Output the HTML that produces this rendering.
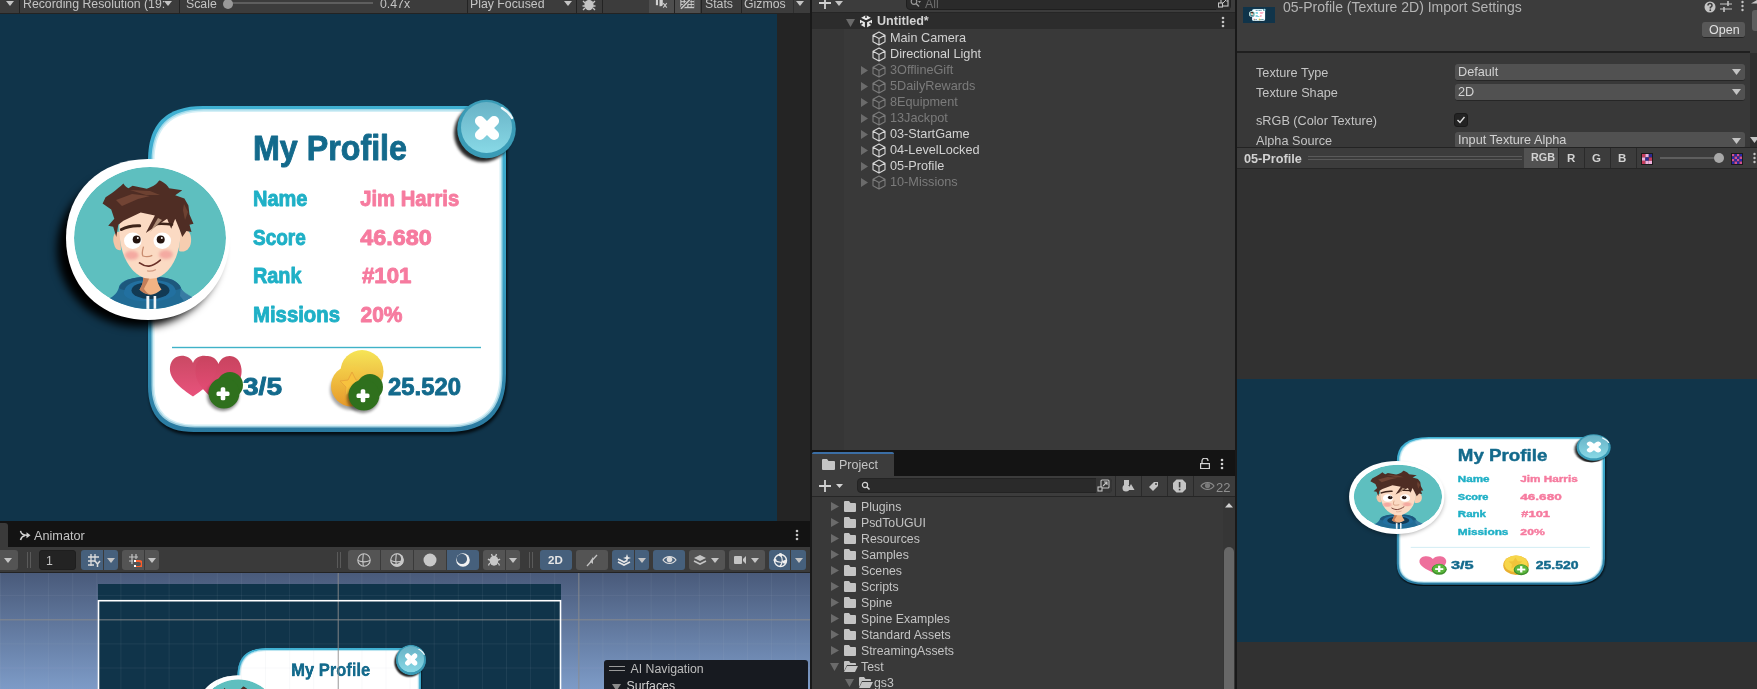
<!DOCTYPE html>
<html><head><meta charset="utf-8">
<style>
*{margin:0;padding:0;box-sizing:border-box}
html,body{width:1757px;height:689px;overflow:hidden;background:#191919;font-family:"Liberation Sans",sans-serif;color:#c4c4c4}
.a{position:absolute}
.t{position:absolute;white-space:pre;line-height:1;will-change:transform}
svg{position:absolute;will-change:transform}
</style></head><body>
<svg width="0" height="0" style="position:absolute;left:0;top:0"><defs>
<linearGradient id="gBorder" x1="0" y1="0" x2="0" y2="1">
  <stop offset="0" stop-color="#3fb0d2"/><stop offset="0.5" stop-color="#3aa0c4"/><stop offset="1" stop-color="#2a7aa0"/></linearGradient>
<radialGradient id="gInner" cx="0.5" cy="0.55" r="0.75">
  <stop offset="0.8" stop-color="#ffffff"/><stop offset="1" stop-color="#dff3f8"/></radialGradient>
<linearGradient id="gClose" x1="0" y1="0" x2="0" y2="1">
  <stop offset="0" stop-color="#68b2c6"/><stop offset="1" stop-color="#88d9e6"/></linearGradient>
<linearGradient id="gHeart" x1="0" y1="0" x2="0" y2="1">
  <stop offset="0" stop-color="#c8445f"/><stop offset="1" stop-color="#e84d78"/></linearGradient>
<linearGradient id="gCoinB" x1="0" y1="0" x2="0" y2="1">
  <stop offset="0" stop-color="#f6e556"/><stop offset="1" stop-color="#e9a93a"/></linearGradient>
<linearGradient id="gCoinF" x1="0" y1="0" x2="0" y2="1">
  <stop offset="0" stop-color="#f4d04a"/><stop offset="1" stop-color="#e6992a"/></linearGradient>
<filter id="fSh" x="-30%" y="-30%" width="160%" height="160%"><feGaussianBlur stdDeviation="4.5"/></filter>
<filter id="fSh2" x="-30%" y="-30%" width="160%" height="160%"><feGaussianBlur stdDeviation="1.5"/></filter>
<clipPath id="cTeal"><ellipse cx="150" cy="238" rx="76" ry="71"/></clipPath>
<g id="cardG"><path d="M203,106 L480,106 Q506,106 506,132 L506,374 Q506,432 448,432 L194,432 Q148,432 148,386 L148,160 Q148,106 203,106 Z" fill="#000" opacity="0.75" transform="translate(1,3)" filter="url(#fSh2)"/>
<path d="M203,106 L480,106 Q506,106 506,132 L506,374 Q506,432 448,432 L194,432 Q148,432 148,386 L148,160 Q148,106 203,106 Z" fill="url(#gBorder)"/>
<path d="M204,110.5 L479,110.5 Q501,110.5 501,133 L501,374 Q501,426 448,426 L195,426 Q153,426 153,385 L153,161 Q153,110.5 204,110.5 Z" fill="#ffffff"/>
<path d="M204,110.5 L479,110.5 Q501,110.5 501,133 L501,374 Q501,426 448,426 L195,426 Q153,426 153,385 L153,161 Q153,110.5 204,110.5 Z" fill="none" stroke="#c6eaf3" stroke-width="3" opacity="0.75"/>
<ellipse cx="139" cy="249" rx="82" ry="78" fill="#000" opacity="1" filter="url(#fSh)"/>
<path d="M148,159 C196,159 230,190 230,236 C230,284 196,320 148,320 C98,320 66,284 66,238 C66,192 100,159 148,159 Z" fill="#ffffff"/>

<g clip-path="url(#cTeal)">
  <ellipse cx="150" cy="238" rx="76" ry="71" fill="#5ebfbf"/>
  <path d="M98,318 C100,306 104,300 110,298 C114,296 118,292 119,287 C121,281 130,277 150,276.6 C166,276.6 176,279 180.6,287 C182,291 186,295 194,298 C198,302 200,310 202,318 Z" fill="#216b95"/>
  <path d="M180.6,289 C186,294 194,297 197,302 L200,318 L190,318 C188,308 184,300 180,296 Z" fill="#3f7fa6" opacity="0.8"/>
  <path d="M119,288 C122,280 132,277 150,277 C168,277 178,280 181,288 C176,293 124,293 119,288 Z" fill="#1d587d"/>
  <path d="M124,294 C126,300 140,302 150.8,301 C162,302 174,298 176,292.6 C176,284 166,280 150,280 C134,280 124,284 124,294 Z" fill="#2270a0"/>
  <ellipse cx="150.5" cy="290.4" rx="19" ry="8.7" fill="#123a54"/>
  <path d="M143.5,276 L156.6,276 C157,282 159,286 161.5,289.5 C158,292.5 154,294.5 150.8,294.8 C147,294.5 142,292.5 139.5,289.5 C142,286 143.3,282 143.5,276 Z" fill="#f2b384"/>
  <path d="M143.5,276 L150,276 C148,282 145,286 144,289 C146,292 148,294 150.8,294.8 C147,294.5 142,292.5 139.5,289.5 C142,286 143.3,282 143.5,276 Z" fill="#b8714f" opacity="0.8"/>
  <rect x="146.4" y="296" width="2.9" height="16" fill="#f2f6f8"/>
  <rect x="153.6" y="296" width="2.6" height="16" fill="#f2f6f8"/>
</g>
<path d="M180,232 C186,226 192,232 191,242 C190,250 184,253 179,251 Z" fill="#f6cdb0"/>
<path d="M120,232 C114,230 112,238 114,244 C115,249 118,251 121,250 Z" fill="#f3c4a6"/>
<path d="M119.5,222 C118,248 126,270 143,277.5 C147,279 154,279 158,277.5 C175,270 182,248 180.5,222 C170,206 130,206 119.5,222 Z" fill="#fbdac3"/>
<ellipse cx="131.6" cy="255.3" rx="7" ry="4.5" fill="#f29a96" opacity="0.75" filter="url(#fSh2)"/>
<ellipse cx="165.9" cy="254.5" rx="7" ry="4.5" fill="#f29a96" opacity="0.75" filter="url(#fSh2)"/>
<path d="M102.6,203.4 L105.6,197.3 L112,193 C116,190 120,187 123.4,183.6 C125,186 126.5,187.5 128.5,188.2 L132.6,185.7 L146.8,188.7 C152,187 156,185 158,182 C158.5,180.5 160,180 161,181 C165,183 168,186 169.1,188.2 L182.3,190.2 L175.2,195.3 L184.4,198.4 L188.4,205.5 L189.5,214.6 L193.5,223.8 L189.5,224.8 L191.5,231.9 L186.4,230.9 L182.3,237 L179.3,228.8 L175.2,218.7 L171.2,228.8 L167.1,218.7 L145.8,232.9 L154.9,215.6 L140.7,212.6 L123.4,220.7 L118.3,224.8 L116.3,237 L113.2,226.8 L108.2,225.8 L114.3,218.7 L111.2,209.5 Z" fill="#4f2d24"/>
<path d="M116,200 L132,194 L150,196 L138,199 L122,206 Z" fill="#7a4a38" opacity="0.8"/>
<path d="M130,190 L150,191 L160,195 L146,195 Z" fill="#7a4a38" opacity="0.7"/>
<path d="M184,204 L188,212 L185,220 L183,210 Z" fill="#7a4a38" opacity="0.7"/>
<path d="M121.4,229.5 C127,226.5 134,225.5 139.7,225.8" stroke="#3e241a" stroke-width="3" fill="none" stroke-linecap="round"/>
<path d="M156,224 C162,223.5 167,223.8 172,224.5" stroke="#3e241a" stroke-width="2.6" fill="none" stroke-linecap="round"/>
<path d="M150,232 L158,218 L162,220 Z" fill="#c9a88f" opacity="0.8"/>
<ellipse cx="132.8" cy="240.8" rx="8.8" ry="8.2" fill="#ffffff"/>
<ellipse cx="162.3" cy="240.8" rx="8.8" ry="8.2" fill="#ffffff"/>
<circle cx="136.7" cy="239.4" r="4" fill="#24140f"/>
<circle cx="160.7" cy="239.4" r="4" fill="#24140f"/>
<circle cx="137.8" cy="238" r="1" fill="#ffffff"/>
<circle cx="161.8" cy="238" r="1" fill="#ffffff"/>
<path d="M143.5,246.6 C142.5,250 141.5,254 143,256 C146,257 150,256.5 152.3,255.3" stroke="#c98d70" stroke-width="1.3" fill="none"/>
<path d="M139.5,262.9 C143,265.5 146,266.3 149,266.1 C153,265.6 157,263 160.3,260.1" stroke="#6a3028" stroke-width="1.7" fill="none" stroke-linecap="round"/>
<path d="M147.5,270.9 C150,271.5 153,271 155.5,269.7" stroke="#d49a80" stroke-width="1.2" fill="none" stroke-linecap="round"/>

<text x="253" y="159.6" font-family="Liberation Sans" font-weight="bold" stroke-width="0.9" stroke-linejoin="round" font-size="34.5" fill="#136a8c" stroke="#136a8c" textLength="154" lengthAdjust="spacingAndGlyphs">My Profile</text>
<text x="253" y="206" font-family="Liberation Sans" font-weight="bold" stroke-width="0.9" stroke-linejoin="round" font-size="21.4" fill="#1fb0c6" stroke="#1fb0c6" textLength="54.5" lengthAdjust="spacingAndGlyphs">Name</text>
<text x="360.2" y="206" font-family="Liberation Sans" font-weight="bold" stroke-width="0.9" stroke-linejoin="round" font-size="21.4" fill="#f67b9f" stroke="#f67b9f" textLength="99" lengthAdjust="spacingAndGlyphs">Jim Harris</text>
<text x="253" y="244.5" font-family="Liberation Sans" font-weight="bold" stroke-width="0.9" stroke-linejoin="round" font-size="21.4" fill="#1fb0c6" stroke="#1fb0c6" textLength="52.7" lengthAdjust="spacingAndGlyphs">Score</text>
<text x="360.2" y="244.5" font-family="Liberation Sans" font-weight="bold" stroke-width="0.9" stroke-linejoin="round" font-size="21.4" fill="#f67b9f" stroke="#f67b9f" textLength="71.5" lengthAdjust="spacingAndGlyphs">46.680</text>
<text x="253" y="283.3" font-family="Liberation Sans" font-weight="bold" stroke-width="0.9" stroke-linejoin="round" font-size="21.4" fill="#1fb0c6" stroke="#1fb0c6" textLength="48.5" lengthAdjust="spacingAndGlyphs">Rank</text>
<text x="362" y="283.3" font-family="Liberation Sans" font-weight="bold" stroke-width="0.9" stroke-linejoin="round" font-size="21.4" fill="#f67b9f" stroke="#f67b9f" textLength="49.5" lengthAdjust="spacingAndGlyphs">#101</text>
<text x="253" y="322" font-family="Liberation Sans" font-weight="bold" stroke-width="0.9" stroke-linejoin="round" font-size="21.4" fill="#1fb0c6" stroke="#1fb0c6" textLength="87" lengthAdjust="spacingAndGlyphs">Missions</text>
<text x="360.5" y="322" font-family="Liberation Sans" font-weight="bold" stroke-width="0.9" stroke-linejoin="round" font-size="21.4" fill="#f67b9f" stroke="#f67b9f" textLength="42" lengthAdjust="spacingAndGlyphs">20%</text>
<rect x="172" y="346.8" width="309" height="1.4" fill="#3fb2c8"/>
<path d="M218.5,364.1 C214.8,353.1 197.3,352.1 195.5,368.9 C194.1,383.3 207.0,393.9 218.5,402.5 C230.0,393.9 242.9,383.3 241.5,368.9 C239.7,352.1 222.2,353.1 218.5,364.1 Z" fill="url(#gHeart)"/>
<path d="M193.0,362.9 C189.3,353.2 171.8,352.4 170.0,367.1 C168.6,379.7 181.5,388.9 193.0,396.5 C204.5,388.9 217.4,379.7 216.0,367.1 C214.2,352.4 196.7,353.2 193.0,362.9 Z" fill="url(#gHeart)" opacity="0.97"/>

<ellipse cx="223" cy="396" rx="16" ry="15" fill="#000" opacity="0.45" filter="url(#fSh2)"/>
<circle cx="230" cy="385" r="13" fill="#2f701d"/>
<circle cx="224" cy="393" r="15.5" fill="#2f701d"/>
<rect x="216.5" y="391.5" width="13" height="4.6" rx="1.5" fill="#fff"/>
<rect x="220.7" y="387.3" width="4.6" height="13" rx="1.5" fill="#fff"/>

<text x="243" y="394.6" font-family="Liberation Sans" font-weight="bold" stroke-width="0.9" stroke-linejoin="round" font-size="24.7" fill="#136a8c" stroke="#136a8c" textLength="39" lengthAdjust="spacingAndGlyphs">3/5</text>
<ellipse cx="352" cy="390" rx="22" ry="20" fill="#000" opacity="0.35" filter="url(#fSh2)"/>
<circle cx="362" cy="371.5" r="21.5" fill="url(#gCoinB)"/>
<circle cx="351.5" cy="386" r="20.5" fill="url(#gCoinF)"/>
<path d="M352,372 L356,380 L364,381 L358,387 L360,396 L352,391 L345,396 L346,387 L340,381 L348,380 Z" fill="#f7c23e" stroke="#e9a73a" stroke-width="1"/>

<ellipse cx="363" cy="398" rx="16" ry="15" fill="#000" opacity="0.45" filter="url(#fSh2)"/>
<circle cx="370" cy="387" r="13" fill="#2f701d"/>
<circle cx="364" cy="395" r="15.5" fill="#2f701d"/>
<rect x="356.5" y="393.5" width="13" height="4.6" rx="1.5" fill="#fff"/>
<rect x="360.7" y="389.3" width="4.6" height="13" rx="1.5" fill="#fff"/>

<text x="388" y="394.6" font-family="Liberation Sans" font-weight="bold" stroke-width="0.9" stroke-linejoin="round" font-size="24.7" fill="#136a8c" stroke="#136a8c" textLength="73" lengthAdjust="spacingAndGlyphs">25.520</text>
<ellipse cx="483" cy="133" rx="29" ry="29" fill="#000" opacity="0.85" filter="url(#fSh2)"/>
<circle cx="486.5" cy="129" r="29.3" fill="#3a9bb6"/>
<circle cx="486.5" cy="127.5" r="25.5" fill="url(#gClose)"/>
<path d="M502,108 C507,111 510,114 512,118" stroke="#ffffff" stroke-width="2.5" fill="none" stroke-linecap="round" opacity="0.9"/>
<g transform="translate(487,128) rotate(45)"><rect x="-15" y="-5" width="30" height="10" rx="5" fill="#fff"/><rect x="-5" y="-15" width="10" height="30" rx="5" fill="#fff"/></g></g><g id="cardP"><path d="M203,106 L480,106 Q506,106 506,132 L506,374 Q506,432 448,432 L194,432 Q148,432 148,386 L148,160 Q148,106 203,106 Z" fill="#000" opacity="0.75" transform="translate(1,3)" filter="url(#fSh2)"/>
<path d="M203,106 L480,106 Q506,106 506,132 L506,374 Q506,432 448,432 L194,432 Q148,432 148,386 L148,160 Q148,106 203,106 Z" fill="url(#gBorder)"/>
<path d="M204,110.5 L479,110.5 Q501,110.5 501,133 L501,374 Q501,426 448,426 L195,426 Q153,426 153,385 L153,161 Q153,110.5 204,110.5 Z" fill="#ffffff"/>
<path d="M204,110.5 L479,110.5 Q501,110.5 501,133 L501,374 Q501,426 448,426 L195,426 Q153,426 153,385 L153,161 Q153,110.5 204,110.5 Z" fill="none" stroke="#c6eaf3" stroke-width="3" opacity="0.75"/>
<ellipse cx="146" cy="244" rx="82" ry="79" fill="#000" opacity="0.35" filter="url(#fSh)"/>
<path d="M148,159 C196,159 230,190 230,236 C230,284 196,320 148,320 C98,320 66,284 66,238 C66,192 100,159 148,159 Z" fill="#ffffff"/>

<g clip-path="url(#cTeal)">
  <ellipse cx="150" cy="238" rx="76" ry="71" fill="#5ebfbf"/>
  <path d="M98,318 C100,306 104,300 110,298 C114,296 118,292 119,287 C121,281 130,277 150,276.6 C166,276.6 176,279 180.6,287 C182,291 186,295 194,298 C198,302 200,310 202,318 Z" fill="#216b95"/>
  <path d="M180.6,289 C186,294 194,297 197,302 L200,318 L190,318 C188,308 184,300 180,296 Z" fill="#3f7fa6" opacity="0.8"/>
  <path d="M119,288 C122,280 132,277 150,277 C168,277 178,280 181,288 C176,293 124,293 119,288 Z" fill="#1d587d"/>
  <path d="M124,294 C126,300 140,302 150.8,301 C162,302 174,298 176,292.6 C176,284 166,280 150,280 C134,280 124,284 124,294 Z" fill="#2270a0"/>
  <ellipse cx="150.5" cy="290.4" rx="19" ry="8.7" fill="#123a54"/>
  <path d="M143.5,276 L156.6,276 C157,282 159,286 161.5,289.5 C158,292.5 154,294.5 150.8,294.8 C147,294.5 142,292.5 139.5,289.5 C142,286 143.3,282 143.5,276 Z" fill="#f2b384"/>
  <path d="M143.5,276 L150,276 C148,282 145,286 144,289 C146,292 148,294 150.8,294.8 C147,294.5 142,292.5 139.5,289.5 C142,286 143.3,282 143.5,276 Z" fill="#b8714f" opacity="0.8"/>
  <rect x="146.4" y="296" width="2.9" height="16" fill="#f2f6f8"/>
  <rect x="153.6" y="296" width="2.6" height="16" fill="#f2f6f8"/>
</g>
<path d="M180,232 C186,226 192,232 191,242 C190,250 184,253 179,251 Z" fill="#f6cdb0"/>
<path d="M120,232 C114,230 112,238 114,244 C115,249 118,251 121,250 Z" fill="#f3c4a6"/>
<path d="M119.5,222 C118,248 126,270 143,277.5 C147,279 154,279 158,277.5 C175,270 182,248 180.5,222 C170,206 130,206 119.5,222 Z" fill="#fbdac3"/>
<ellipse cx="131.6" cy="255.3" rx="7" ry="4.5" fill="#f29a96" opacity="0.75" filter="url(#fSh2)"/>
<ellipse cx="165.9" cy="254.5" rx="7" ry="4.5" fill="#f29a96" opacity="0.75" filter="url(#fSh2)"/>
<path d="M102.6,203.4 L105.6,197.3 L112,193 C116,190 120,187 123.4,183.6 C125,186 126.5,187.5 128.5,188.2 L132.6,185.7 L146.8,188.7 C152,187 156,185 158,182 C158.5,180.5 160,180 161,181 C165,183 168,186 169.1,188.2 L182.3,190.2 L175.2,195.3 L184.4,198.4 L188.4,205.5 L189.5,214.6 L193.5,223.8 L189.5,224.8 L191.5,231.9 L186.4,230.9 L182.3,237 L179.3,228.8 L175.2,218.7 L171.2,228.8 L167.1,218.7 L145.8,232.9 L154.9,215.6 L140.7,212.6 L123.4,220.7 L118.3,224.8 L116.3,237 L113.2,226.8 L108.2,225.8 L114.3,218.7 L111.2,209.5 Z" fill="#4f2d24"/>
<path d="M116,200 L132,194 L150,196 L138,199 L122,206 Z" fill="#7a4a38" opacity="0.8"/>
<path d="M130,190 L150,191 L160,195 L146,195 Z" fill="#7a4a38" opacity="0.7"/>
<path d="M184,204 L188,212 L185,220 L183,210 Z" fill="#7a4a38" opacity="0.7"/>
<path d="M121.4,229.5 C127,226.5 134,225.5 139.7,225.8" stroke="#3e241a" stroke-width="3" fill="none" stroke-linecap="round"/>
<path d="M156,224 C162,223.5 167,223.8 172,224.5" stroke="#3e241a" stroke-width="2.6" fill="none" stroke-linecap="round"/>
<path d="M150,232 L158,218 L162,220 Z" fill="#c9a88f" opacity="0.8"/>
<ellipse cx="132.8" cy="240.8" rx="8.8" ry="8.2" fill="#ffffff"/>
<ellipse cx="162.3" cy="240.8" rx="8.8" ry="8.2" fill="#ffffff"/>
<circle cx="136.7" cy="239.4" r="4" fill="#24140f"/>
<circle cx="160.7" cy="239.4" r="4" fill="#24140f"/>
<circle cx="137.8" cy="238" r="1" fill="#ffffff"/>
<circle cx="161.8" cy="238" r="1" fill="#ffffff"/>
<path d="M143.5,246.6 C142.5,250 141.5,254 143,256 C146,257 150,256.5 152.3,255.3" stroke="#c98d70" stroke-width="1.3" fill="none"/>
<path d="M139.5,262.9 C143,265.5 146,266.3 149,266.1 C153,265.6 157,263 160.3,260.1" stroke="#6a3028" stroke-width="1.7" fill="none" stroke-linecap="round"/>
<path d="M147.5,270.9 C150,271.5 153,271 155.5,269.7" stroke="#d49a80" stroke-width="1.2" fill="none" stroke-linecap="round"/>

<text x="253" y="159.6" font-family="Liberation Sans" font-weight="bold" stroke-width="0.9" stroke-linejoin="round" font-size="34.5" fill="#136a8c" stroke="#136a8c" textLength="154" lengthAdjust="spacingAndGlyphs">My Profile</text>
<text x="253" y="206" font-family="Liberation Sans" font-weight="bold" stroke-width="0.9" stroke-linejoin="round" font-size="21.4" fill="#1fb0c6" stroke="#1fb0c6" textLength="54.5" lengthAdjust="spacingAndGlyphs">Name</text>
<text x="360.2" y="206" font-family="Liberation Sans" font-weight="bold" stroke-width="0.9" stroke-linejoin="round" font-size="21.4" fill="#f67b9f" stroke="#f67b9f" textLength="99" lengthAdjust="spacingAndGlyphs">Jim Harris</text>
<text x="253" y="244.5" font-family="Liberation Sans" font-weight="bold" stroke-width="0.9" stroke-linejoin="round" font-size="21.4" fill="#1fb0c6" stroke="#1fb0c6" textLength="52.7" lengthAdjust="spacingAndGlyphs">Score</text>
<text x="360.2" y="244.5" font-family="Liberation Sans" font-weight="bold" stroke-width="0.9" stroke-linejoin="round" font-size="21.4" fill="#f67b9f" stroke="#f67b9f" textLength="71.5" lengthAdjust="spacingAndGlyphs">46.680</text>
<text x="253" y="283.3" font-family="Liberation Sans" font-weight="bold" stroke-width="0.9" stroke-linejoin="round" font-size="21.4" fill="#1fb0c6" stroke="#1fb0c6" textLength="48.5" lengthAdjust="spacingAndGlyphs">Rank</text>
<text x="362" y="283.3" font-family="Liberation Sans" font-weight="bold" stroke-width="0.9" stroke-linejoin="round" font-size="21.4" fill="#f67b9f" stroke="#f67b9f" textLength="49.5" lengthAdjust="spacingAndGlyphs">#101</text>
<text x="253" y="322" font-family="Liberation Sans" font-weight="bold" stroke-width="0.9" stroke-linejoin="round" font-size="21.4" fill="#1fb0c6" stroke="#1fb0c6" textLength="87" lengthAdjust="spacingAndGlyphs">Missions</text>
<text x="360.5" y="322" font-family="Liberation Sans" font-weight="bold" stroke-width="0.9" stroke-linejoin="round" font-size="21.4" fill="#f67b9f" stroke="#f67b9f" textLength="42" lengthAdjust="spacingAndGlyphs">20%</text>
<rect x="172" y="348.5" width="308" height="2" fill="#cdebf2"/>
<path d="M210.0,375.4 C206.3,366.9 188.8,366.1 187.0,379.1 C185.6,390.2 198.5,398.3 210.0,405.0 C221.5,398.3 234.4,390.2 233.0,379.1 C231.2,366.1 213.7,366.9 210.0,375.4 Z" fill="#ee6f9c"/>
<ellipse cx="221" cy="398" rx="13" ry="12" fill="#3f8f2c"/>
<ellipse cx="221" cy="397" rx="11" ry="10" fill="#5bb63c"/>
<rect x="214" y="395.5" width="14" height="4" fill="#fff"/><rect x="219" y="390" width="4" height="14" fill="#fff"/>
<text x="241.2" y="397" font-family="Liberation Sans" font-weight="bold" stroke-width="0.9" stroke-linejoin="round" font-size="23" fill="#136a8c" stroke="#136a8c" textLength="39" lengthAdjust="spacingAndGlyphs">3/5</text>
<ellipse cx="353" cy="389" rx="22" ry="21.5" fill="#e9b030"/>
<ellipse cx="353" cy="386" rx="20" ry="18.5" fill="#f7d64a"/>
<path d="M352,372 L356,380 L364,381 L358,387 L360,396 L352,391 L345,396 L346,387 L340,381 L348,380 Z" fill="#f0c43a"/>
<ellipse cx="362" cy="399" rx="13" ry="12" fill="#3f8f2c"/>
<ellipse cx="362" cy="398" rx="11" ry="10" fill="#5bb63c"/>
<rect x="355" y="396.5" width="14" height="4" fill="#fff"/><rect x="360" y="391" width="4" height="14" fill="#fff"/>
<text x="387" y="396.3" font-family="Liberation Sans" font-weight="bold" stroke-width="0.9" stroke-linejoin="round" font-size="23" fill="#136a8c" stroke="#136a8c" textLength="73.5" lengthAdjust="spacingAndGlyphs">25.520</text>
<ellipse cx="483" cy="133" rx="29" ry="29" fill="#000" opacity="0.85" filter="url(#fSh2)"/>
<circle cx="486.5" cy="129" r="29.3" fill="#3a9bb6"/>
<circle cx="486.5" cy="127.5" r="25.5" fill="url(#gClose)"/>
<path d="M502,108 C507,111 510,114 512,118" stroke="#ffffff" stroke-width="2.5" fill="none" stroke-linecap="round" opacity="0.9"/>
<g transform="translate(487,128) rotate(45)"><rect x="-15" y="-5" width="30" height="10" rx="5" fill="#fff"/><rect x="-5" y="-15" width="10" height="30" rx="5" fill="#fff"/></g></g></defs></svg>
<div class="a" style="left:0px;top:0px;width:810px;height:13px;background:#3c3c3c;"></div>
<div class="a" style="left:0px;top:13px;width:810px;height:1px;background:#232323;"></div>
<svg style="left:6.0px;top:0.5px;" width="8" height="5" viewBox="0 0 8 5"><path d="M0,0 L8,0 L4.0,5 Z" fill="#c4c4c4"/></svg>
<div class="a" style="left:19px;top:0px;width:1px;height:13px;background:#232323;"></div>
<div class="t" style="left:23px;top:-2.41px;font-size:12.3px;color:#c4c4c4;">Recording Resolution (19:</div>
<svg style="left:164.0px;top:0.5px;" width="8" height="5" viewBox="0 0 8 5"><path d="M0,0 L8,0 L4.0,5 Z" fill="#c4c4c4"/></svg>
<div class="a" style="left:179px;top:0px;width:1px;height:13px;background:#232323;"></div>
<div class="t" style="left:186px;top:-2.41px;font-size:12.3px;color:#c4c4c4;">Scale</div>
<div class="a" style="left:230px;top:2px;width:143px;height:2px;background:#5e5e5e;"></div>
<div class="a" style="left:223px;top:-1px;width:10px;height:10px;background:#999999;border-radius:50%"></div>
<div class="t" style="left:380px;top:-2.41px;font-size:12.3px;color:#c4c4c4;">0.47x</div>
<div class="a" style="left:467px;top:0px;width:1px;height:13px;background:#232323;"></div>
<div class="t" style="left:470px;top:-2.41px;font-size:12.3px;color:#c4c4c4;">Play Focused</div>
<svg style="left:564.0px;top:0.5px;" width="8" height="5" viewBox="0 0 8 5"><path d="M0,0 L8,0 L4.0,5 Z" fill="#c4c4c4"/></svg>
<div class="a" style="left:576px;top:0px;width:1px;height:13px;background:#232323;"></div>
<svg style="left:582px;top:-3px;" width="14" height="14" viewBox="0 0 14 14"><ellipse cx="7" cy="8" rx="4.6" ry="5.2" fill="#c4c4c4"/><path d="M1,4 L3,6 M13,4 L11,6 M0.5,9 L3,9 M13.5,9 L11,9 M1,13 L3,11 M13,13 L11,11" stroke="#c4c4c4" stroke-width="1.3"/></svg>
<div class="a" style="left:602px;top:0px;width:1px;height:13px;background:#232323;"></div>
<div class="a" style="left:649px;top:0px;width:25px;height:13px;background:#4e4e4e;"></div>
<div class="a" style="left:675px;top:0px;width:25px;height:13px;background:#4e4e4e;"></div>
<div class="a" style="left:674px;top:0px;width:1px;height:13px;background:#232323;"></div>
<svg style="left:650px;top:-4px;" width="50" height="14" viewBox="0 0 50 14"><rect x="5.899999999999977" y="0" width="2.1" height="9.2" fill="#d0d0d0"/><path d="M9.5,0 H12.799999999999955 V8.2 Q12.799999999999955,10.2 11,10.2 H9.5 Z" fill="#d0d0d0"/><path d="M13.200000000000045,7.2 L16.799999999999955,11.6 M16.799999999999955,7.2 L13.200000000000045,11.6" stroke="#c8c8c8" stroke-width="1.1"/><rect x="30.299999999999955" y="0" width="13.9" height="12.2" fill="#c8c8c8"/><rect x="31.399999999999977" y="2.0" width="2.3" height="3.1" fill="#4e4e4e"/><rect x="31.399999999999977" y="6.2" width="2.3" height="1.8" fill="#4e4e4e"/><rect x="31.399999999999977" y="9.0" width="2.3" height="1.8" fill="#4e4e4e"/><rect x="34.89999999999998" y="2.0" width="2.3" height="3.1" fill="#4e4e4e"/><rect x="34.89999999999998" y="6.2" width="2.3" height="1.8" fill="#4e4e4e"/><rect x="34.89999999999998" y="9.0" width="2.3" height="1.8" fill="#4e4e4e"/><rect x="38.5" y="2.0" width="2.3" height="3.1" fill="#4e4e4e"/><rect x="38.5" y="6.2" width="2.3" height="1.8" fill="#4e4e4e"/><rect x="38.5" y="9.0" width="2.3" height="1.8" fill="#4e4e4e"/><rect x="41.60000000000002" y="2.0" width="2.3" height="3.1" fill="#4e4e4e"/><rect x="41.60000000000002" y="6.2" width="2.3" height="1.8" fill="#4e4e4e"/><rect x="41.60000000000002" y="9.0" width="2.3" height="1.8" fill="#4e4e4e"/><path d="M31,12.8 L41,2.5" stroke="#4e4e4e" stroke-width="3.2"/><path d="M31,12.8 L41,2.5" stroke="#c8c8c8" stroke-width="1.6"/></svg>
<div class="a" style="left:701px;top:0px;width:1px;height:13px;background:#232323;"></div>
<div class="t" style="left:705px;top:-2.41px;font-size:12.3px;color:#c4c4c4;">Stats</div>
<div class="a" style="left:741px;top:0px;width:1px;height:13px;background:#232323;"></div>
<div class="t" style="left:744px;top:-2.41px;font-size:12.3px;color:#c4c4c4;">Gizmos</div>
<div class="a" style="left:793px;top:0px;width:1px;height:13px;background:#2e2e2e;"></div>
<svg style="left:796.0px;top:0.5px;" width="8" height="5" viewBox="0 0 8 5"><path d="M0,0 L8,0 L4.0,5 Z" fill="#c4c4c4"/></svg>
<div class="a" style="left:0px;top:14px;width:777px;height:507px;background:#10344a;"></div>
<div class="a" style="left:777px;top:14px;width:33px;height:507px;background:#242424;"></div>
<svg style="left:0px;top:14px;overflow:hidden" width="777" height="507" viewBox="0 14 777 507"><use href="#cardG"/></svg>
<div class="a" style="left:0px;top:521px;width:810px;height:26px;background:#131313;"></div>
<div class="a" style="left:0px;top:523px;width:8px;height:24px;background:#3a3a3a;border-radius:0 3px 0 0"></div>
<svg style="left:19px;top:530px;" width="12" height="11" viewBox="0 0 12 11"><path d="M1.5,0.8 C2,3.5 4,5.2 8,5.2" stroke="#d2d2d2" stroke-width="1.5" fill="none"/><path d="M1.5,10 C2,8 3.5,6.2 6,5.6" stroke="#d2d2d2" stroke-width="1.5" fill="none"/><path d="M7.5,2.2 L11.5,5.2 L7.5,8.2 Z" fill="#d2d2d2"/></svg>
<div class="t" style="left:34px;top:529.75px;font-size:12.7px;color:#c4c4c4;">Animator</div>
<svg style="left:792px;top:529px;" width="10" height="12" viewBox="0 0 10 12"><circle cx="5" cy="2" r="1.3" fill="#c4c4c4"/><circle cx="5" cy="6" r="1.3" fill="#c4c4c4"/><circle cx="5" cy="10" r="1.3" fill="#c4c4c4"/></svg>
<div class="a" style="left:0px;top:547px;width:810px;height:26px;background:#3a3a3a;"></div>
<div class="a" style="left:0px;top:550px;width:18px;height:20px;background:#545454;border-radius:0 3px 3px 0"></div>
<svg style="left:4.0px;top:557.5px;" width="8" height="5" viewBox="0 0 8 5"><path d="M0,0 L8,0 L4.0,5 Z" fill="#c4c4c4"/></svg>
<div class="a" style="left:27px;top:552px;width:1px;height:16px;background:#5a5a5a;"></div>
<div class="a" style="left:30px;top:552px;width:1px;height:16px;background:#5a5a5a;"></div>
<div class="a" style="left:39px;top:550px;width:37px;height:20px;background:#232323;border-radius:3px;border:1px solid #1e1e1e"></div>
<div class="t" style="left:46px;top:554.59px;font-size:12.3px;color:#c4c4c4;">1</div>
<div class="a" style="left:81px;top:550px;width:22px;height:20px;background:#46607c;border-radius:3px 0 0 3px"></div>
<div class="a" style="left:104px;top:550px;width:14px;height:20px;background:#46607c;border-radius:0 3px 3px 0"></div>
<svg style="left:87px;top:553px;" width="14" height="14" viewBox="0 0 14 14"><path d="M1,4 H12 M1,8 H8 M1,12 H7 M4,1 V13 M8,1 V9" stroke="#dcdcdc" stroke-width="1.3" fill="none"/><path d="M8,8 L10.5,11 L13,8 M10.5,11 V14" stroke="#dcdcdc" stroke-width="1.5" fill="none"/></svg>
<svg style="left:107.0px;top:557.5px;" width="8" height="5" viewBox="0 0 8 5"><path d="M0,0 L8,0 L4.0,5 Z" fill="#c4c4c4"/></svg>
<div class="a" style="left:122px;top:550px;width:22px;height:20px;background:#545454;border-radius:3px 0 0 3px"></div>
<div class="a" style="left:145px;top:550px;width:14px;height:20px;background:#545454;border-radius:0 3px 3px 0"></div>
<svg style="left:128px;top:553px;" width="14" height="14" viewBox="0 0 14 14"><path d="M1,4 H10 M1,8 H5 M4,1 V11 M8,1 V6" stroke="#c4c4c4" stroke-width="1.2" fill="none"/><path d="M8,8 H11 A3,3 0 0 1 11,14 H8" stroke="#ff5e2a" stroke-width="2" fill="none"/><rect x="6" y="7" width="2" height="2" fill="#fff"/><rect x="6" y="12" width="2" height="2" fill="#fff"/></svg>
<svg style="left:148.0px;top:557.5px;" width="8" height="5" viewBox="0 0 8 5"><path d="M0,0 L8,0 L4.0,5 Z" fill="#c4c4c4"/></svg>
<div class="a" style="left:337px;top:552px;width:1px;height:16px;background:#5a5a5a;"></div>
<div class="a" style="left:340px;top:552px;width:1px;height:16px;background:#5a5a5a;"></div>
<div class="a" style="left:348px;top:550px;width:32px;height:20px;background:#545454;border-radius:3px 0 0 3px"></div>
<div class="a" style="left:381px;top:550px;width:32px;height:20px;background:#545454;border-radius:0"></div>
<div class="a" style="left:414px;top:550px;width:32px;height:20px;background:#545454;border-radius:0"></div>
<div class="a" style="left:447px;top:550px;width:32px;height:20px;background:#46607c;border-radius:0 3px 3px 0"></div>
<svg style="left:357px;top:553px;" width="14" height="14" viewBox="0 0 14 14"><circle cx="7" cy="7" r="6.2" stroke="#c8c8c8" stroke-width="1.1" fill="none"/><path d="M0.9,7.6 Q7,10.2 13.1,7.6 M6.3,0.8 Q5.2,7 6.3,13.2" stroke="#c8c8c8" stroke-width="1.1" fill="none"/></svg>
<svg style="left:390px;top:553px;" width="14" height="14" viewBox="0 0 14 14"><circle cx="7" cy="7" r="6.7" fill="#c8c8c8"/><circle cx="5.7" cy="5.7" r="5.4" fill="#545454"/><circle cx="7" cy="7" r="6.2" stroke="#c8c8c8" stroke-width="1.1" fill="none"/><path d="M0.9,7.6 Q7,10.2 13.1,7.6 M6.3,0.8 Q5.2,7 6.3,13.2" stroke="#c8c8c8" stroke-width="1.1" fill="none"/></svg>
<svg style="left:423px;top:553px;" width="14" height="14" viewBox="0 0 14 14"><circle cx="7" cy="7" r="6.5" fill="#c8c8c8"/></svg>
<svg style="left:456px;top:553px;" width="14" height="14" viewBox="0 0 14 14"><circle cx="7" cy="7" r="6.8" fill="#f2f2f2"/><circle cx="5.9" cy="5.9" r="5.2" fill="#46607c"/></svg>
<div class="a" style="left:483px;top:550px;width:22px;height:20px;background:#545454;border-radius:3px 0 0 3px"></div>
<div class="a" style="left:506px;top:550px;width:14px;height:20px;background:#545454;border-radius:0 3px 3px 0"></div>
<svg style="left:487px;top:553px;" width="14" height="14" viewBox="0 0 14 14"><ellipse cx="7" cy="7.8" rx="4.3" ry="5" fill="#c8c8c8"/><path d="M4.5,1 Q5,3 6,3.5 M9.5,1 Q9,3 8,3.5 M1,6 Q2,7 3.2,7 M13,6 Q12,7 10.8,7 M1.5,12.5 Q2,10.5 3.2,10.2 M12.5,12.5 Q12,10.5 10.8,10.2" stroke="#c8c8c8" stroke-width="1.3" fill="none"/></svg>
<svg style="left:509.0px;top:557.5px;" width="8" height="5" viewBox="0 0 8 5"><path d="M0,0 L8,0 L4.0,5 Z" fill="#c4c4c4"/></svg>
<div class="a" style="left:529px;top:552px;width:1px;height:16px;background:#5a5a5a;"></div>
<div class="a" style="left:532px;top:552px;width:1px;height:16px;background:#5a5a5a;"></div>
<div class="a" style="left:540px;top:550px;width:32px;height:20px;background:#46607c;border-radius:3px"></div>
<div class="t" style="left:548px;top:555.27px;font-size:11.5px;color:#e6e6e6;font-weight:bold;">2D</div>
<div class="a" style="left:576px;top:550px;width:32px;height:20px;background:#545454;border-radius:3px"></div>
<svg style="left:585px;top:553px;" width="14" height="14" viewBox="0 0 14 14"><path d="M8,4 L8,11 L5,8.5 Z" fill="#c4c4c4"/><path d="M2,13 L12,2" stroke="#c4c4c4" stroke-width="1.3"/></svg>
<div class="a" style="left:612px;top:550px;width:22px;height:20px;background:#46607c;border-radius:3px 0 0 3px"></div>
<div class="a" style="left:635px;top:550px;width:14px;height:20px;background:#46607c;border-radius:0 3px 3px 0"></div>
<svg style="left:617px;top:553px;" width="14" height="14" viewBox="0 0 14 14"><path d="M1,9 L7,12 L13,9 M1,6 L7,9 L10,7.5" stroke="#e6e6e6" stroke-width="1.6" fill="none"/><path d="M10,1 L11,4 L14,5 L11,6 L10,9 L9,6 L6,5 L9,4 Z" fill="#e6e6e6"/></svg>
<svg style="left:638.0px;top:557.5px;" width="8" height="5" viewBox="0 0 8 5"><path d="M0,0 L8,0 L4.0,5 Z" fill="#c4c4c4"/></svg>
<div class="a" style="left:653px;top:550px;width:32px;height:20px;background:#46607c;border-radius:3px"></div>
<svg style="left:662px;top:553px;" width="15" height="14" viewBox="0 0 15 14"><path d="M1,7 C4,2.5 11,2.5 14,7 C11,11.5 4,11.5 1,7 Z" stroke="#dcdcdc" stroke-width="1.2" fill="none"/><circle cx="7.5" cy="6.5" r="2.8" fill="#dcdcdc"/></svg>
<div class="a" style="left:689px;top:550px;width:36px;height:20px;background:#545454;border-radius:3px"></div>
<svg style="left:693px;top:553px;" width="14" height="14" viewBox="0 0 14 14"><path d="M1,5 L7,2 L13,5 L7,8 Z" fill="#c4c4c4"/><path d="M1,8 L7,11 L13,8" stroke="#c4c4c4" stroke-width="1.6" fill="none"/></svg>
<svg style="left:711.0px;top:557.5px;" width="8" height="5" viewBox="0 0 8 5"><path d="M0,0 L8,0 L4.0,5 Z" fill="#c4c4c4"/></svg>
<div class="a" style="left:729px;top:550px;width:36px;height:20px;background:#545454;border-radius:3px"></div>
<svg style="left:733px;top:553px;" width="14" height="14" viewBox="0 0 14 14"><rect x="1" y="3" width="8" height="8" rx="1" fill="#c4c4c4"/><path d="M10,6 L13,3 L13,11 L10,8 Z" fill="#c4c4c4"/></svg>
<svg style="left:751.0px;top:557.5px;" width="8" height="5" viewBox="0 0 8 5"><path d="M0,0 L8,0 L4.0,5 Z" fill="#c4c4c4"/></svg>
<div class="a" style="left:769px;top:550px;width:21px;height:20px;background:#46607c;border-radius:3px 0 0 3px"></div>
<div class="a" style="left:791px;top:550px;width:15px;height:20px;background:#46607c;border-radius:0 3px 3px 0"></div>
<svg style="left:773px;top:553px;" width="15" height="15" viewBox="0 0 15 15"><circle cx="7.5" cy="7.5" r="6" stroke="#f0f0f0" stroke-width="1.4" fill="none"/><path d="M1.5,7 C5,10 10,10 13.5,7 M7,1.5 C10,5 10,10 7,13.5" stroke="#f0f0f0" stroke-width="1.2" fill="none"/><circle cx="7.5" cy="1.8" r="1.8" fill="#f0f0f0"/><circle cx="11.5" cy="9" r="1.8" fill="#f0f0f0"/><circle cx="2" cy="7" r="1.5" fill="#f0f0f0"/></svg>
<svg style="left:795.0px;top:557.5px;" width="8" height="5" viewBox="0 0 8 5"><path d="M0,0 L8,0 L4.0,5 Z" fill="#c4c4c4"/></svg>
<div class="a" style="left:810px;top:521px;width:2px;height:168px;background:#191919;"></div>
<svg style="left:0px;top:572px;overflow:hidden" width="810" height="117" viewBox="0 0 810 117"><defs><linearGradient id="gSky" x1="0" y1="0" x2="0" y2="1"><stop offset="0" stop-color="#495a7a"/><stop offset="1" stop-color="#7d9bc7"/></linearGradient></defs><rect x="0" y="0" width="810" height="117" fill="url(#gSky)"/><rect x="98" y="12" width="463" height="105" fill="#10344a"/><g transform="translate(161.4,21.799999999999955) scale(0.513)"><svg x="-124" y="14" width="901" height="507" viewBox="-124 14 901 507" overflow="hidden"><use href="#cardG"/></svg></g><rect x="819.3" y="0" width="1" height="117" fill="#b0b8c8" opacity="0.09"/><rect x="795.2" y="0" width="1" height="117" fill="#b0b8c8" opacity="0.09"/><rect x="771.1" y="0" width="1" height="117" fill="#b0b8c8" opacity="0.09"/><rect x="747.0" y="0" width="1" height="117" fill="#b0b8c8" opacity="0.09"/><rect x="722.9" y="0" width="1" height="117" fill="#b0b8c8" opacity="0.09"/><rect x="698.8" y="0" width="1" height="117" fill="#b0b8c8" opacity="0.09"/><rect x="674.7" y="0" width="1" height="117" fill="#b0b8c8" opacity="0.09"/><rect x="650.6" y="0" width="1" height="117" fill="#b0b8c8" opacity="0.09"/><rect x="626.5" y="0" width="1" height="117" fill="#b0b8c8" opacity="0.09"/><rect x="602.4" y="0" width="1" height="117" fill="#b0b8c8" opacity="0.09"/><rect x="578.3" y="0" width="1" height="117" fill="#b0b8c8" opacity="0.09"/><rect x="554.2" y="0" width="1" height="117" fill="#b0b8c8" opacity="0.09"/><rect x="530.1" y="0" width="1" height="117" fill="#b0b8c8" opacity="0.09"/><rect x="506.0" y="0" width="1" height="117" fill="#b0b8c8" opacity="0.09"/><rect x="481.9" y="0" width="1" height="117" fill="#b0b8c8" opacity="0.09"/><rect x="457.8" y="0" width="1" height="117" fill="#b0b8c8" opacity="0.09"/><rect x="433.7" y="0" width="1" height="117" fill="#b0b8c8" opacity="0.09"/><rect x="409.6" y="0" width="1" height="117" fill="#b0b8c8" opacity="0.09"/><rect x="385.5" y="0" width="1" height="117" fill="#b0b8c8" opacity="0.09"/><rect x="361.4" y="0" width="1" height="117" fill="#b0b8c8" opacity="0.09"/><rect x="337.3" y="0" width="1" height="117" fill="#b0b8c8" opacity="0.09"/><rect x="313.2" y="0" width="1" height="117" fill="#b0b8c8" opacity="0.09"/><rect x="289.1" y="0" width="1" height="117" fill="#b0b8c8" opacity="0.09"/><rect x="265.0" y="0" width="1" height="117" fill="#b0b8c8" opacity="0.09"/><rect x="240.9" y="0" width="1" height="117" fill="#b0b8c8" opacity="0.09"/><rect x="216.8" y="0" width="1" height="117" fill="#b0b8c8" opacity="0.09"/><rect x="192.7" y="0" width="1" height="117" fill="#b0b8c8" opacity="0.09"/><rect x="168.6" y="0" width="1" height="117" fill="#b0b8c8" opacity="0.09"/><rect x="144.5" y="0" width="1" height="117" fill="#b0b8c8" opacity="0.09"/><rect x="120.4" y="0" width="1" height="117" fill="#b0b8c8" opacity="0.09"/><rect x="96.3" y="0" width="1" height="117" fill="#b0b8c8" opacity="0.09"/><rect x="72.2" y="0" width="1" height="117" fill="#b0b8c8" opacity="0.09"/><rect x="48.1" y="0" width="1" height="117" fill="#b0b8c8" opacity="0.09"/><rect x="24.0" y="0" width="1" height="117" fill="#b0b8c8" opacity="0.09"/><rect x="-0.1" y="0" width="1" height="117" fill="#b0b8c8" opacity="0.09"/><rect x="0" y="23.1" width="810" height="1" fill="#b0b8c8" opacity="0.09"/><rect x="0" y="47.3" width="810" height="1" fill="#b0b8c8" opacity="0.09"/><rect x="0" y="71.4" width="810" height="1" fill="#b0b8c8" opacity="0.09"/><rect x="0" y="95.5" width="810" height="1" fill="#b0b8c8" opacity="0.09"/><rect x="337.7" y="0" width="1.2" height="117" fill="#8a8a8a" opacity="0.7"/><rect x="578.2" y="0" width="1.2" height="117" fill="#8a8a8a" opacity="0.7"/><rect x="0" y="47.2" width="810" height="1.2" fill="#8a8a8a" opacity="0.7"/><rect x="98.5" y="28.7" width="462" height="100" fill="none" stroke="#ffffff" stroke-width="1.6"/><rect x="604" y="88" width="204" height="40" rx="3" fill="#171a20"/><path d="M609,94.5 H625 M609,98.5 H625" stroke="#9a9a9a" stroke-width="1"/><text x="630.5" y="100.8" font-family="Liberation Sans" font-size="12.3" fill="#bdbdbd">AI Navigation</text><path d="M612,112 L621,112 L616.5,119 Z" fill="#8a8a8a"/><text x="626.5" y="117.5" font-family="Liberation Sans" font-size="12.3" fill="#d2d2d2">Surfaces</text></svg>
<div class="a" style="left:0px;top:572px;width:810px;height:1px;background:#232323;"></div>
<div class="a" style="left:812px;top:0px;width:423px;height:13px;background:#3c3c3c;"></div>
<div class="a" style="left:812px;top:12px;width:423px;height:1px;background:#262626;"></div>
<svg style="left:819px;top:-3px;" width="12" height="12" viewBox="0 0 12 12"><path d="M6,0 V12 M0,6 H12" stroke="#d2d2d2" stroke-width="1.8"/></svg>
<svg style="left:834.5px;top:0.5px;" width="8" height="5" viewBox="0 0 8 5"><path d="M0,0 L8,0 L4.0,5 Z" fill="#c4c4c4"/></svg>
<div class="a" style="left:906px;top:-6px;width:325px;height:16px;background:#2a2a2a;border-radius:4px;border:1px solid #1f1f1f"></div>
<svg style="left:910px;top:-2px;" width="12" height="10" viewBox="0 0 12 10"><circle cx="4" cy="3.5" r="2.8" stroke="#9a9a9a" stroke-width="1.2" fill="none"/><path d="M6,5.5 L9,8.5" stroke="#9a9a9a" stroke-width="1.4"/><path d="M8,3 L11,3 L9.5,5 Z" fill="#9a9a9a"/></svg>
<div class="t" style="left:925px;top:-2.41px;font-size:12.3px;color:#6e6e6e;">All</div>
<div class="a" style="left:1216px;top:-2px;width:14px;height:12px;background:#2a2a2a;"></div>
<svg style="left:1218px;top:-3px;" width="11" height="12" viewBox="0 0 11 12"><rect x="3" y="1" width="7" height="8" fill="none" stroke="#c4c4c4" stroke-width="1.1"/><rect x="0.5" y="6" width="4" height="4" fill="#2a2a2a" stroke="#c4c4c4" stroke-width="1.1"/><path d="M5,6 L9,2 M6,2 H9 V5" stroke="#c4c4c4" stroke-width="1"/></svg>
<div class="a" style="left:812px;top:13px;width:423px;height:16px;background:#2c2c2c;"></div>
<div class="a" style="left:812px;top:29px;width:423px;height:421px;background:#393939;"></div>
<div class="a" style="left:812px;top:29px;width:32px;height:421px;background:#363636;"></div>
<svg style="left:846.0px;top:19.0px;" width="9" height="8" viewBox="0 0 9 8"><path d="M0,0 L9,0 L4.5,8 Z" fill="#6a6a6a"/></svg>
<svg style="left:859px;top:14px;" width="14" height="15" viewBox="0 0 14 15"><path d="M7,1 L13,4.5 L13,10.5 L7,14 L1,10.5 L1,4.5 Z" fill="#e8e8e8"/><path d="M7,7.5 L7,14 M7,7.5 L1,4.5 M7,7.5 L13,4.5" stroke="#2c2c2c" stroke-width="2.2"/><path d="M7,1 L7,4 M1,10.5 L3.5,9 M13,10.5 L10.5,9" stroke="#2c2c2c" stroke-width="1.5"/></svg>
<div class="t" style="left:877px;top:15.13px;font-size:12.6px;color:#d2d2d2;font-weight:bold;">Untitled*</div>
<svg style="left:1220px;top:16px;" width="6" height="12" viewBox="0 0 6 12"><circle cx="3" cy="2" r="1.3" fill="#c4c4c4"/><circle cx="3" cy="6" r="1.3" fill="#c4c4c4"/><circle cx="3" cy="10" r="1.3" fill="#c4c4c4"/></svg>
<svg style="left:872.3px;top:30.5px;" width="14" height="15" viewBox="0 0 14 15"><path d="M7,1 L13,4.2 L13,10.8 L7,14 L1,10.8 L1,4.2 Z M1,4.2 L7,7.5 L13,4.2 M7,7.5 V14" stroke="#d8d8d8" stroke-width="1.1" fill="none" stroke-linejoin="round"/></svg>
<div class="t" style="left:889.8px;top:31.85px;font-size:12.7px;color:#d2d2d2;">Main Camera</div>
<svg style="left:872.3px;top:46.5px;" width="14" height="15" viewBox="0 0 14 15"><path d="M7,1 L13,4.2 L13,10.8 L7,14 L1,10.8 L1,4.2 Z M1,4.2 L7,7.5 L13,4.2 M7,7.5 V14" stroke="#d8d8d8" stroke-width="1.1" fill="none" stroke-linejoin="round"/></svg>
<div class="t" style="left:889.8px;top:47.85px;font-size:12.7px;color:#d2d2d2;">Directional Light</div>
<svg style="left:861.0px;top:65.6px;" width="7" height="9" viewBox="0 0 7 9"><path d="M0,0 L7,4.5 L0,9 Z" fill="#6b6b6b"/></svg>
<svg style="left:872.3px;top:62.49999999999999px;" width="14" height="15" viewBox="0 0 14 15"><path d="M7,1 L13,4.2 L13,10.8 L7,14 L1,10.8 L1,4.2 Z M1,4.2 L7,7.5 L13,4.2 M7,7.5 V14" stroke="#7b7b7b" stroke-width="1.1" fill="none" stroke-linejoin="round"/></svg>
<div class="t" style="left:889.8px;top:63.85px;font-size:12.7px;color:#7b7b7b;">3OfflineGift</div>
<svg style="left:861.0px;top:81.6px;" width="7" height="9" viewBox="0 0 7 9"><path d="M0,0 L7,4.5 L0,9 Z" fill="#6b6b6b"/></svg>
<svg style="left:872.3px;top:78.5px;" width="14" height="15" viewBox="0 0 14 15"><path d="M7,1 L13,4.2 L13,10.8 L7,14 L1,10.8 L1,4.2 Z M1,4.2 L7,7.5 L13,4.2 M7,7.5 V14" stroke="#7b7b7b" stroke-width="1.1" fill="none" stroke-linejoin="round"/></svg>
<div class="t" style="left:889.8px;top:79.85px;font-size:12.7px;color:#7b7b7b;">5DailyRewards</div>
<svg style="left:861.0px;top:97.6px;" width="7" height="9" viewBox="0 0 7 9"><path d="M0,0 L7,4.5 L0,9 Z" fill="#6b6b6b"/></svg>
<svg style="left:872.3px;top:94.5px;" width="14" height="15" viewBox="0 0 14 15"><path d="M7,1 L13,4.2 L13,10.8 L7,14 L1,10.8 L1,4.2 Z M1,4.2 L7,7.5 L13,4.2 M7,7.5 V14" stroke="#7b7b7b" stroke-width="1.1" fill="none" stroke-linejoin="round"/></svg>
<div class="t" style="left:889.8px;top:95.85px;font-size:12.7px;color:#7b7b7b;">8Equipment</div>
<svg style="left:861.0px;top:113.6px;" width="7" height="9" viewBox="0 0 7 9"><path d="M0,0 L7,4.5 L0,9 Z" fill="#6b6b6b"/></svg>
<svg style="left:872.3px;top:110.5px;" width="14" height="15" viewBox="0 0 14 15"><path d="M7,1 L13,4.2 L13,10.8 L7,14 L1,10.8 L1,4.2 Z M1,4.2 L7,7.5 L13,4.2 M7,7.5 V14" stroke="#7b7b7b" stroke-width="1.1" fill="none" stroke-linejoin="round"/></svg>
<div class="t" style="left:889.8px;top:111.85px;font-size:12.7px;color:#7b7b7b;">13Jackpot</div>
<svg style="left:861.0px;top:129.6px;" width="7" height="9" viewBox="0 0 7 9"><path d="M0,0 L7,4.5 L0,9 Z" fill="#6b6b6b"/></svg>
<svg style="left:872.3px;top:126.5px;" width="14" height="15" viewBox="0 0 14 15"><path d="M7,1 L13,4.2 L13,10.8 L7,14 L1,10.8 L1,4.2 Z M1,4.2 L7,7.5 L13,4.2 M7,7.5 V14" stroke="#d8d8d8" stroke-width="1.1" fill="none" stroke-linejoin="round"/></svg>
<div class="t" style="left:889.8px;top:127.85px;font-size:12.7px;color:#d2d2d2;">03-StartGame</div>
<svg style="left:861.0px;top:145.6px;" width="7" height="9" viewBox="0 0 7 9"><path d="M0,0 L7,4.5 L0,9 Z" fill="#6b6b6b"/></svg>
<svg style="left:872.3px;top:142.5px;" width="14" height="15" viewBox="0 0 14 15"><path d="M7,1 L13,4.2 L13,10.8 L7,14 L1,10.8 L1,4.2 Z M1,4.2 L7,7.5 L13,4.2 M7,7.5 V14" stroke="#d8d8d8" stroke-width="1.1" fill="none" stroke-linejoin="round"/></svg>
<div class="t" style="left:889.8px;top:143.85px;font-size:12.7px;color:#d2d2d2;">04-LevelLocked</div>
<svg style="left:861.0px;top:161.6px;" width="7" height="9" viewBox="0 0 7 9"><path d="M0,0 L7,4.5 L0,9 Z" fill="#6b6b6b"/></svg>
<svg style="left:872.3px;top:158.5px;" width="14" height="15" viewBox="0 0 14 15"><path d="M7,1 L13,4.2 L13,10.8 L7,14 L1,10.8 L1,4.2 Z M1,4.2 L7,7.5 L13,4.2 M7,7.5 V14" stroke="#d8d8d8" stroke-width="1.1" fill="none" stroke-linejoin="round"/></svg>
<div class="t" style="left:889.8px;top:159.85px;font-size:12.7px;color:#d2d2d2;">05-Profile</div>
<svg style="left:861.0px;top:177.6px;" width="7" height="9" viewBox="0 0 7 9"><path d="M0,0 L7,4.5 L0,9 Z" fill="#6b6b6b"/></svg>
<svg style="left:872.3px;top:174.5px;" width="14" height="15" viewBox="0 0 14 15"><path d="M7,1 L13,4.2 L13,10.8 L7,14 L1,10.8 L1,4.2 Z M1,4.2 L7,7.5 L13,4.2 M7,7.5 V14" stroke="#7b7b7b" stroke-width="1.1" fill="none" stroke-linejoin="round"/></svg>
<div class="t" style="left:889.8px;top:175.85px;font-size:12.7px;color:#7b7b7b;">10-Missions</div>
<div class="a" style="left:1235px;top:0px;width:2px;height:689px;background:#191919;"></div>
<div class="a" style="left:812px;top:450px;width:423px;height:26px;background:#141414;"></div>
<div class="a" style="left:812px;top:452px;width:82px;height:24px;background:#3c3c3c;border-radius:3px 3px 0 0"></div>
<div class="a" style="left:812px;top:452px;width:82px;height:2px;background:#3b6ea5;border-radius:3px 3px 0 0"></div>
<svg style="left:822px;top:459px;" width="13" height="11" viewBox="0 0 13 11"><path d="M0,1 Q0,0 1,0 L5,0 L6.5,2 L12,2 Q13,2 13,3 L13,10 Q13,11 12,11 L1,11 Q0,11 0,10 Z" fill="#c4c4c4"/></svg>
<div class="t" style="left:838.5px;top:459.42px;font-size:12.5px;color:#c4c4c4;">Project</div>
<svg style="left:1200px;top:458px;" width="10" height="11" viewBox="0 0 10 11"><path d="M2,5 V3 A3,3 0 0 1 8,3" stroke="#d2d2d2" stroke-width="1.3" fill="none"/><rect x="0.6" y="5.6" width="8.8" height="5" fill="none" stroke="#d2d2d2" stroke-width="1.2"/></svg>
<svg style="left:1219px;top:458px;" width="6" height="12" viewBox="0 0 6 12"><circle cx="3" cy="2" r="1.3" fill="#d2d2d2"/><circle cx="3" cy="6" r="1.3" fill="#d2d2d2"/><circle cx="3" cy="10" r="1.3" fill="#d2d2d2"/></svg>
<div class="a" style="left:812px;top:476px;width:423px;height:20px;background:#3c3c3c;"></div>
<div class="a" style="left:812px;top:496px;width:423px;height:1px;background:#262626;"></div>
<svg style="left:819px;top:480px;" width="12" height="12" viewBox="0 0 12 12"><path d="M6,0 V12 M0,6 H12" stroke="#d2d2d2" stroke-width="1.8"/></svg>
<svg style="left:835.5px;top:484.0px;" width="7" height="4" viewBox="0 0 7 4"><path d="M0,0 L7,0 L3.5,4 Z" fill="#d2d2d2"/></svg>
<div class="a" style="left:857px;top:478px;width:255px;height:15px;background:#2a2a2a;border-radius:4px;border:1px solid #232323"></div>
<svg style="left:861px;top:481px;" width="10" height="10" viewBox="0 0 10 10"><circle cx="4" cy="4" r="2.6" stroke="#d2d2d2" stroke-width="1.2" fill="none"/><path d="M6,6 L8.5,8.5" stroke="#d2d2d2" stroke-width="1.6"/></svg>
<div class="a" style="left:1096px;top:478px;width:16px;height:15px;background:#353535;border-radius:0 4px 4px 0"></div>
<svg style="left:1097px;top:479px;" width="13" height="13" viewBox="0 0 13 13"><rect x="4" y="1" width="8" height="8" rx="1" fill="none" stroke="#c4c4c4" stroke-width="1.1"/><rect x="1" y="8" width="4" height="4" fill="#353535" stroke="#c4c4c4" stroke-width="1.1"/><path d="M6,7 L10,3 M7,3 H10 V6" stroke="#c4c4c4" stroke-width="1.1" fill="none"/></svg>
<div class="a" style="left:1115px;top:476px;width:1px;height:20px;background:#2a2a2a;"></div>
<div class="a" style="left:1141px;top:476px;width:1px;height:20px;background:#2a2a2a;"></div>
<div class="a" style="left:1167px;top:476px;width:1px;height:20px;background:#2a2a2a;"></div>
<div class="a" style="left:1193px;top:476px;width:1px;height:20px;background:#2a2a2a;"></div>
<svg style="left:1121px;top:479px;" width="14" height="13" viewBox="0 0 14 13"><rect x="3" y="1" width="5" height="5" fill="#c4c4c4"/><circle cx="5" cy="9" r="3.5" fill="#c4c4c4"/><path d="M10,5 L13.5,11 L6.5,11 Z" fill="#c4c4c4"/></svg>
<svg style="left:1147px;top:480px;" width="13" height="13" viewBox="0 0 13 13"><path d="M2,7 L7,2 L11,2 L11,6 L6,11 Z" fill="#c4c4c4"/><circle cx="9" cy="4" r="1" fill="#3c3c3c"/></svg>
<svg style="left:1172px;top:479px;" width="15" height="14" viewBox="0 0 15 14"><path d="M4.5,0.5 L10.5,0.5 L14,4 L14,10 L10.5,13.5 L4.5,13.5 L1,10 L1,4 Z" fill="#c4c4c4"/><rect x="6.8" y="3" width="1.6" height="5.5" fill="#3c3c3c"/><rect x="6.8" y="9.8" width="1.6" height="1.6" fill="#3c3c3c"/></svg>
<svg style="left:1200px;top:480px;" width="15" height="12" viewBox="0 0 15 12"><path d="M1,6 C4,1.5 11,1.5 14,6 C11,10.5 4,10.5 1,6 Z" stroke="#8a8a8a" stroke-width="1.2" fill="none"/><circle cx="7.5" cy="5.5" r="2.6" fill="#7a7a7a"/></svg>
<div class="t" style="left:1215.5px;top:480.50px;font-size:13px;color:#8f8f8f;">22</div>
<div class="a" style="left:812px;top:497px;width:423px;height:192px;background:#393939;"></div>
<svg style="left:830.5px;top:502.0px;" width="8" height="9" viewBox="0 0 8 9"><path d="M0,0 L8,4.5 L0,9 Z" fill="#6b6b6b"/></svg>
<svg style="left:844px;top:501px;" width="12" height="11" viewBox="0 0 12 11"><path d="M0,1 Q0,0 1,0 L5,0 L6.5,2 L11,2 Q12,2 12,3 L12,10 Q12,11 11,11 L1,11 Q0,11 0,10 Z" fill="#c4c4c4"/></svg>
<div class="t" style="left:860.5px;top:500.59px;font-size:12.3px;color:#c4c4c4;">Plugins</div>
<svg style="left:830.5px;top:518.0px;" width="8" height="9" viewBox="0 0 8 9"><path d="M0,0 L8,4.5 L0,9 Z" fill="#6b6b6b"/></svg>
<svg style="left:844px;top:517px;" width="12" height="11" viewBox="0 0 12 11"><path d="M0,1 Q0,0 1,0 L5,0 L6.5,2 L11,2 Q12,2 12,3 L12,10 Q12,11 11,11 L1,11 Q0,11 0,10 Z" fill="#c4c4c4"/></svg>
<div class="t" style="left:860.5px;top:516.59px;font-size:12.3px;color:#c4c4c4;">PsdToUGUI</div>
<svg style="left:830.5px;top:534.0px;" width="8" height="9" viewBox="0 0 8 9"><path d="M0,0 L8,4.5 L0,9 Z" fill="#6b6b6b"/></svg>
<svg style="left:844px;top:533px;" width="12" height="11" viewBox="0 0 12 11"><path d="M0,1 Q0,0 1,0 L5,0 L6.5,2 L11,2 Q12,2 12,3 L12,10 Q12,11 11,11 L1,11 Q0,11 0,10 Z" fill="#c4c4c4"/></svg>
<div class="t" style="left:860.5px;top:532.59px;font-size:12.3px;color:#c4c4c4;">Resources</div>
<svg style="left:830.5px;top:550.0px;" width="8" height="9" viewBox="0 0 8 9"><path d="M0,0 L8,4.5 L0,9 Z" fill="#6b6b6b"/></svg>
<svg style="left:844px;top:549px;" width="12" height="11" viewBox="0 0 12 11"><path d="M0,1 Q0,0 1,0 L5,0 L6.5,2 L11,2 Q12,2 12,3 L12,10 Q12,11 11,11 L1,11 Q0,11 0,10 Z" fill="#c4c4c4"/></svg>
<div class="t" style="left:860.5px;top:548.59px;font-size:12.3px;color:#c4c4c4;">Samples</div>
<svg style="left:830.5px;top:566.0px;" width="8" height="9" viewBox="0 0 8 9"><path d="M0,0 L8,4.5 L0,9 Z" fill="#6b6b6b"/></svg>
<svg style="left:844px;top:565px;" width="12" height="11" viewBox="0 0 12 11"><path d="M0,1 Q0,0 1,0 L5,0 L6.5,2 L11,2 Q12,2 12,3 L12,10 Q12,11 11,11 L1,11 Q0,11 0,10 Z" fill="#c4c4c4"/></svg>
<div class="t" style="left:860.5px;top:564.59px;font-size:12.3px;color:#c4c4c4;">Scenes</div>
<svg style="left:830.5px;top:582.0px;" width="8" height="9" viewBox="0 0 8 9"><path d="M0,0 L8,4.5 L0,9 Z" fill="#6b6b6b"/></svg>
<svg style="left:844px;top:581px;" width="12" height="11" viewBox="0 0 12 11"><path d="M0,1 Q0,0 1,0 L5,0 L6.5,2 L11,2 Q12,2 12,3 L12,10 Q12,11 11,11 L1,11 Q0,11 0,10 Z" fill="#c4c4c4"/></svg>
<div class="t" style="left:860.5px;top:580.59px;font-size:12.3px;color:#c4c4c4;">Scripts</div>
<svg style="left:830.5px;top:598.0px;" width="8" height="9" viewBox="0 0 8 9"><path d="M0,0 L8,4.5 L0,9 Z" fill="#6b6b6b"/></svg>
<svg style="left:844px;top:597px;" width="12" height="11" viewBox="0 0 12 11"><path d="M0,1 Q0,0 1,0 L5,0 L6.5,2 L11,2 Q12,2 12,3 L12,10 Q12,11 11,11 L1,11 Q0,11 0,10 Z" fill="#c4c4c4"/></svg>
<div class="t" style="left:860.5px;top:596.59px;font-size:12.3px;color:#c4c4c4;">Spine</div>
<svg style="left:830.5px;top:614.0px;" width="8" height="9" viewBox="0 0 8 9"><path d="M0,0 L8,4.5 L0,9 Z" fill="#6b6b6b"/></svg>
<svg style="left:844px;top:613px;" width="12" height="11" viewBox="0 0 12 11"><path d="M0,1 Q0,0 1,0 L5,0 L6.5,2 L11,2 Q12,2 12,3 L12,10 Q12,11 11,11 L1,11 Q0,11 0,10 Z" fill="#c4c4c4"/></svg>
<div class="t" style="left:860.5px;top:612.59px;font-size:12.3px;color:#c4c4c4;">Spine Examples</div>
<svg style="left:830.5px;top:630.0px;" width="8" height="9" viewBox="0 0 8 9"><path d="M0,0 L8,4.5 L0,9 Z" fill="#6b6b6b"/></svg>
<svg style="left:844px;top:629px;" width="12" height="11" viewBox="0 0 12 11"><path d="M0,1 Q0,0 1,0 L5,0 L6.5,2 L11,2 Q12,2 12,3 L12,10 Q12,11 11,11 L1,11 Q0,11 0,10 Z" fill="#c4c4c4"/></svg>
<div class="t" style="left:860.5px;top:628.59px;font-size:12.3px;color:#c4c4c4;">Standard Assets</div>
<svg style="left:830.5px;top:646.0px;" width="8" height="9" viewBox="0 0 8 9"><path d="M0,0 L8,4.5 L0,9 Z" fill="#6b6b6b"/></svg>
<svg style="left:844px;top:645px;" width="12" height="11" viewBox="0 0 12 11"><path d="M0,1 Q0,0 1,0 L5,0 L6.5,2 L11,2 Q12,2 12,3 L12,10 Q12,11 11,11 L1,11 Q0,11 0,10 Z" fill="#c4c4c4"/></svg>
<div class="t" style="left:860.5px;top:644.59px;font-size:12.3px;color:#c4c4c4;">StreamingAssets</div>
<svg style="left:830.0px;top:662.5px;" width="9" height="8" viewBox="0 0 9 8"><path d="M0,0 L9,0 L4.5,8 Z" fill="#6b6b6b"/></svg>
<svg style="left:843.5px;top:661px;" width="14" height="11" viewBox="0 0 14 11"><path d="M0,1 Q0,0 1,0 L5,0 L6.5,2 L11,2 Q12,2 12,3 L12,4 L3,4 L0,10 Z" fill="#c4c4c4"/><path d="M3,5 L14,5 L11,11 L0,11 Z" fill="#c4c4c4"/></svg>
<div class="t" style="left:860.5px;top:660.59px;font-size:12.3px;color:#c4c4c4;">Test</div>
<svg style="left:844.5px;top:678.5px;" width="9" height="8" viewBox="0 0 9 8"><path d="M0,0 L9,0 L4.5,8 Z" fill="#6b6b6b"/></svg>
<svg style="left:858.5px;top:677px;" width="14" height="11" viewBox="0 0 14 11"><path d="M0,1 Q0,0 1,0 L5,0 L6.5,2 L11,2 Q12,2 12,3 L12,4 L3,4 L0,10 Z" fill="#c4c4c4"/><path d="M3,5 L14,5 L11,11 L0,11 Z" fill="#c4c4c4"/></svg>
<div class="t" style="left:874px;top:676.59px;font-size:12.3px;color:#c4c4c4;">gs3</div>
<div class="a" style="left:1223px;top:497px;width:12px;height:192px;background:#363636;"></div>
<div class="a" style="left:1224px;top:547px;width:10px;height:150px;background:#676767;border-radius:5px"></div>
<svg style="left:1223px;top:501px;" width="12" height="8" viewBox="0 0 12 8"><path d="M2,6.5 L10,6.5 L6,2 Z" fill="#d2d2d2"/></svg>
<div class="a" style="left:1237px;top:0px;width:520px;height:51px;background:#3c3c3c;"></div>
<div class="a" style="left:1237px;top:51px;width:513px;height:2px;background:#1f1f1f;"></div>
<svg style="left:1243px;top:7px;overflow:hidden" width="32" height="16" viewBox="0 0 32 16"><rect width="32" height="16" fill="#10344a"/><g transform="translate(3.5,-1.9) scale(0.037,0.037)"><use href="#cardP"/></g></svg>
<div class="t" style="left:1283px;top:-0.35px;font-size:14px;color:#b4b4b4;">05-Profile (Texture 2D) Import Settings</div>
<svg style="left:1704px;top:1px;" width="12" height="12" viewBox="0 0 12 12"><circle cx="6" cy="6" r="5.5" fill="#c4c4c4"/><path d="M4,4.6 Q4,2.6 6,2.6 Q8,2.6 8,4.4 Q8,5.6 6.4,6.3 L6.4,7.4" stroke="#3c3c3c" stroke-width="1.5" fill="none"/><circle cx="6.3" cy="9.2" r="0.9" fill="#3c3c3c"/></svg>
<svg style="left:1720px;top:1px;" width="12" height="12" viewBox="0 0 12 12"><path d="M0,3 H12 M0,8 H12" stroke="#c4c4c4" stroke-width="1.2"/><path d="M8,0 V5 M4,6 V11" stroke="#c4c4c4" stroke-width="1.6"/></svg>
<svg style="left:1740px;top:0px;" width="5" height="12" viewBox="0 0 5 12"><circle cx="2.5" cy="2" r="1.2" fill="#c4c4c4"/><circle cx="2.5" cy="6" r="1.2" fill="#c4c4c4"/><circle cx="2.5" cy="10" r="1.2" fill="#c4c4c4"/></svg>
<div class="a" style="left:1702px;top:22px;width:43px;height:16px;background:#585858;border-radius:3px;border-bottom:1px solid #262626"></div>
<div class="t" style="left:1709px;top:23.92px;font-size:12.5px;color:#e0e0e0;">Open</div>
<div class="a" style="left:1750px;top:0px;width:7px;height:147px;background:#3c3c3c;"></div>
<div class="a" style="left:1752px;top:10px;width:5px;height:21px;background:#5f5f5f;border-radius:3px 0 0 3px"></div>
<svg style="left:1750px;top:0px;" width="7" height="4" viewBox="0 0 7 4"><path d="M1,3.5 L7,3.5 L7,0 Z" fill="#c4c4c4"/></svg>
<div class="a" style="left:1237px;top:53px;width:513px;height:94px;background:#383838;"></div>
<div class="t" style="left:1256px;top:67.05px;font-size:12.7px;color:#c4c4c4;">Texture Type</div>
<div class="a" style="left:1455px;top:64px;width:290px;height:17px;background:#515151;border-radius:3px;border-bottom:1px solid #262626"></div>
<div class="t" style="left:1458px;top:66.05px;font-size:12.7px;color:#d2d2d2;">Default</div>
<svg style="left:1732.0px;top:69.3px;" width="9" height="6" viewBox="0 0 9 6"><path d="M0,0 L9,0 L4.5,6 Z" fill="#c4c4c4"/></svg>
<div class="t" style="left:1256px;top:87.05px;font-size:12.7px;color:#c4c4c4;">Texture Shape</div>
<div class="a" style="left:1455px;top:84px;width:290px;height:17px;background:#515151;border-radius:3px;border-bottom:1px solid #262626"></div>
<div class="t" style="left:1458px;top:86.05px;font-size:12.7px;color:#d2d2d2;">2D</div>
<svg style="left:1732.0px;top:89.3px;" width="9" height="6" viewBox="0 0 9 6"><path d="M0,0 L9,0 L4.5,6 Z" fill="#c4c4c4"/></svg>
<div class="t" style="left:1256px;top:115.25px;font-size:12.7px;color:#c4c4c4;">sRGB (Color Texture)</div>
<div class="a" style="left:1454px;top:113px;width:14px;height:14px;background:#232323;border-radius:3px;border:1px solid #1a1a1a"></div>
<svg style="left:1456px;top:115px;" width="10" height="10" viewBox="0 0 10 10"><path d="M1.5,5 L4,7.5 L8.5,2" stroke="#e0e0e0" stroke-width="1.4" fill="none"/></svg>
<div class="t" style="left:1256px;top:135.25px;font-size:12.7px;color:#c4c4c4;">Alpha Source</div>
<div class="a" style="left:1455px;top:132px;width:290px;height:17px;background:#515151;border-radius:3px;border-bottom:1px solid #262626"></div>
<div class="t" style="left:1458px;top:134.25px;font-size:12.7px;color:#d2d2d2;">Input Texture Alpha</div>
<svg style="left:1732.0px;top:137.5px;" width="9" height="6" viewBox="0 0 9 6"><path d="M0,0 L9,0 L4.5,6 Z" fill="#c4c4c4"/></svg>
<div class="a" style="left:1750px;top:53px;width:7px;height:94px;background:#2f2f2f;"></div>
<svg style="left:1750.0px;top:136.5px;" width="9" height="6" viewBox="0 0 9 6"><path d="M0,0 L9,0 L4.5,6 Z" fill="#c4c4c4"/></svg>
<div class="a" style="left:1237px;top:147px;width:520px;height:1px;background:#232323;"></div>
<div class="a" style="left:1237px;top:148px;width:520px;height:20px;background:#3c3c3c;"></div>
<div class="a" style="left:1237px;top:168px;width:520px;height:1px;background:#262626;"></div>
<div class="t" style="left:1244px;top:153.25px;font-size:12.7px;color:#d2d2d2;font-weight:bold;">05-Profile</div>
<div class="a" style="left:1308px;top:156px;width:214px;height:1px;background:#5a5a5a;"></div>
<div class="a" style="left:1308px;top:159px;width:214px;height:1px;background:#5a5a5a;"></div>
<div class="a" style="left:1524px;top:148px;width:34px;height:20px;background:#525252;"></div>
<div class="t" style="left:1530.5px;top:152.36px;font-size:10.8px;color:#d2d2d2;font-weight:bold;">RGB</div>
<div class="a" style="left:1558px;top:148px;width:1px;height:20px;background:#2a2a2a;"></div>
<div class="a" style="left:1584px;top:148px;width:1px;height:20px;background:#2a2a2a;"></div>
<div class="a" style="left:1610px;top:148px;width:1px;height:20px;background:#2a2a2a;"></div>
<div class="a" style="left:1636px;top:148px;width:1px;height:20px;background:#2a2a2a;"></div>
<div class="t" style="left:1566.5px;top:152.77px;font-size:11.5px;color:#d2d2d2;font-weight:bold;">R</div>
<div class="t" style="left:1592px;top:152.77px;font-size:11.5px;color:#d2d2d2;font-weight:bold;">G</div>
<div class="t" style="left:1618px;top:152.77px;font-size:11.5px;color:#d2d2d2;font-weight:bold;">B</div>
<svg style="left:1641px;top:153px;" width="12" height="12" viewBox="0 0 12 12"><rect width="12" height="12" fill="#1a1a1a"/><rect x="1" y="1" width="3.4" height="3.4" fill="#c43a5a"/><rect x="4.4" y="1" width="3.4" height="3.4" fill="#eeb0dc"/><rect x="7.8" y="1" width="3.2" height="3.4" fill="#2a2a90"/><rect x="1" y="4.4" width="3.4" height="3.4" fill="#eeb0dc"/><rect x="4.4" y="4.4" width="3.4" height="3.4" fill="#2a2a90"/><rect x="7.8" y="4.4" width="3.2" height="3.4" fill="#c43a5a"/><rect x="1" y="7.8" width="3.4" height="3.2" fill="#c43a5a"/><rect x="4.4" y="7.8" width="3.4" height="3.2" fill="#eeb0dc"/><rect x="7.8" y="7.8" width="3.2" height="3.2" fill="#eeb0dc"/></svg>
<div class="a" style="left:1660px;top:157px;width:60px;height:2px;background:#5e5e5e;"></div>
<div class="a" style="left:1714px;top:153px;width:10px;height:10px;background:#a8a8a8;border-radius:50%"></div>
<svg style="left:1731px;top:153px;" width="12" height="12" viewBox="0 0 12 12"><rect width="12" height="12" fill="#1a1a1a"/><rect x="1.0" y="1.0" width="2.5" height="2.5" fill="#d05090"/><rect x="3.5" y="1.0" width="2.5" height="2.5" fill="#2828a8"/><rect x="6.0" y="1.0" width="2.5" height="2.5" fill="#d05090"/><rect x="8.5" y="1.0" width="2.5" height="2.5" fill="#2828a8"/><rect x="1.0" y="3.5" width="2.5" height="2.5" fill="#2828a8"/><rect x="3.5" y="3.5" width="2.5" height="2.5" fill="#d05090"/><rect x="6.0" y="3.5" width="2.5" height="2.5" fill="#2828a8"/><rect x="8.5" y="3.5" width="2.5" height="2.5" fill="#d05090"/><rect x="1.0" y="6.0" width="2.5" height="2.5" fill="#d05090"/><rect x="3.5" y="6.0" width="2.5" height="2.5" fill="#2828a8"/><rect x="6.0" y="6.0" width="2.5" height="2.5" fill="#d05090"/><rect x="8.5" y="6.0" width="2.5" height="2.5" fill="#2828a8"/><rect x="1.0" y="8.5" width="2.5" height="2.5" fill="#2828a8"/><rect x="3.5" y="8.5" width="2.5" height="2.5" fill="#d05090"/><rect x="6.0" y="8.5" width="2.5" height="2.5" fill="#2828a8"/><rect x="8.5" y="8.5" width="2.5" height="2.5" fill="#d05090"/></svg>
<svg style="left:1752px;top:152px;" width="5" height="12" viewBox="0 0 5 12"><circle cx="2.5" cy="2" r="1.2" fill="#c4c4c4"/><circle cx="2.5" cy="6" r="1.2" fill="#c4c4c4"/><circle cx="2.5" cy="10" r="1.2" fill="#c4c4c4"/></svg>
<div class="a" style="left:1237px;top:169px;width:520px;height:210px;background:#313131;"></div>
<div class="a" style="left:1237px;top:379px;width:520px;height:263px;background:#11354a;"></div>
<svg style="left:1237px;top:379px;overflow:hidden" width="520" height="263" viewBox="0 0 520 263"><g transform="translate(73.7,10) scale(0.5816,0.453)"><use href="#cardP"/></g></svg>
<div class="a" style="left:1237px;top:642px;width:520px;height:47px;background:#313131;"></div>
</body></html>
